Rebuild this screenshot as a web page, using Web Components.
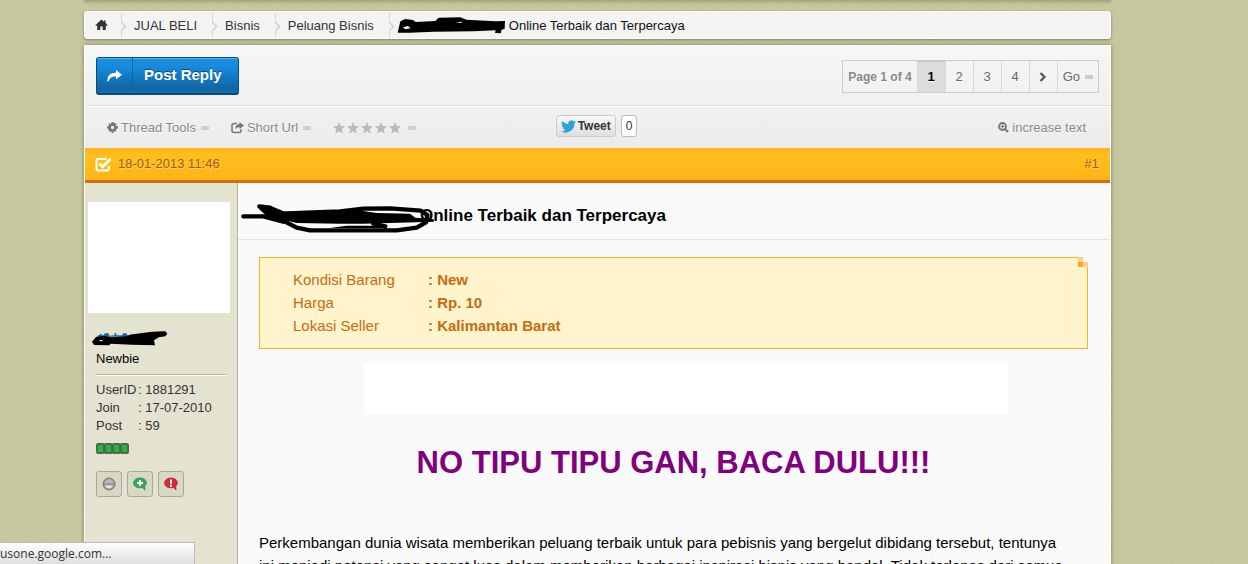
<!DOCTYPE html>
<html lang="id">
<head>
<meta charset="utf-8">
<meta name="viewport" content="width=device-width">
<title>Online Terbaik dan Terpercaya</title>
<style>
html{scrollbar-width:none}
body{margin:0;font:13px/18px "Liberation Sans",Arial,sans-serif;color:#333;
background:repeating-linear-gradient(135deg,#c9c9a1 0 2px,#c6c69d 2px 4px)}
</style>
</head>
<body>
<forum-page>
  <forum-breadcrumb>
    <a href="#">JUAL BELI</a>
    <a href="#">Bisnis</a>
    <a href="#">Peluang Bisnis</a>
    <span slot="current">Online Terbaik dan Terpercaya</span>
  </forum-breadcrumb>
  <forum-panel>
    <reply-bar><page-nav></page-nav></reply-bar>
    <thread-tools></thread-tools>
    <post-header><time slot="date" datetime="2013-01-18T11:46">18-01-2013 11:46</time><a slot="number" href="#1">#1</a></post-header>
    <forum-post>
      <user-card slot="user"><span>Newbie</span></user-card>
      <post-title slot="title">Online Terbaik dan Terpercaya</post-title>
      <listing-info></listing-info>
      <post-body>
        <span slot="heading">NO TIPU TIPU GAN, BACA DULU!!!</span>
        Perkembangan dunia wisata memberikan peluang terbaik untuk para pebisnis yang bergelut dibidang tersebut, tentunya<br>
        ini menjadi potensi yang sangat luas dalam memberikan berbagai inspirasi bisnis yang handal. Tidak terlepas dari semua
      </post-body>
    </forum-post>
  </forum-panel>
</forum-page>
<status-bubble>usone.google.com...</status-bubble>
<script>
function component(name, html) {
  customElements.define(name, class extends HTMLElement {
    constructor() {
      super();
      const template = document.createElement('template');
      template.innerHTML = '<style>:host,*{box-sizing:border-box}a{color:inherit;text-decoration:none}svg{display:block;flex:none}</style>' + html;
      this.attachShadow({ mode: 'open' }).append(template.content.cloneNode(true));
    }
  });
}

component('forum-page', `
<style>
:host{display:block;margin:0 137px 0 84px}
.top{height:1px;background:#a3a37f;box-shadow:0 1px 3px #77775a}
main{display:flex;flex-direction:column;gap:6px;padding-top:10px}
</style>
<div class="top"></div><main><slot></slot></main>`);

/* Rule with a small chevron that precedes each crumb */
component('crumb-rule', `
<style>:host{display:block;flex:none;width:6px;margin-right:-5px}</style>
<svg width="6" height="26" viewBox="0 0 6 26"><path d="M.500 0V10.500M.500 18.500V26" fill="none" stroke="#d8d8d8"/><path d="M.500 10.500L4.500 14.500.500 18.500" fill="none" stroke="#ccc" stroke-width="1.400"/></svg>`);

component('forum-breadcrumb', `
<style>
:host{display:block}
nav{display:flex;height:28px;align-items:stretch;background:#f3f3f3;border:1px solid #fff;border-radius:3px;box-shadow:0 1px 3px #77775a;padding-left:10px;color:#333;line-height:27px}
.home{display:flex;align-items:center;padding-right:13px}
::slotted(a){color:#333;text-decoration:none;padding:0 15px 0 12px}
.current{display:flex;align-items:center;gap:4px;color:#111}
.current svg{margin-left:7px}
</style>
<nav aria-label="Breadcrumb">
<a class="home" href="#" aria-label="Home"><svg width="13" height="12" viewBox="0 0 13 12"><path fill="#333" d="M6.500 0.500 0.300 6.300l.8.8L2.200 6.200V11h3.100V7.500h2.400V11h3.100V6.200l1.100.9.8-.8L10.600 4V1.400H9v1.300z"/></svg></a>
<slot></slot>
<div class="current"><svg width="108" height="18" viewBox="50 50 324 54"><path d="M52 100 60 66 75 59 98 62 106 68 165 65 175 55 240 54 258 61 345 66 374 65 373 88 363 92 362 102 344 101 346 93 280 96 160 97 142 98 88 100z"/><path d="M68 84l15-4 8 7-16 3zM226 69l20-2-4 4z" fill="#f3f3f3"/></svg><slot name="current"></slot></div>
</nav>`);
for (const host of document.querySelectorAll('forum-breadcrumb')) {
  for (const crumb of host.querySelectorAll('a')) crumb.before(document.createElement('crumb-rule'));
  host.shadowRoot.querySelector('.current').before(document.createElement('crumb-rule'));
}

component('forum-panel', `
<style>:host{display:block;border:1px solid #fff;border-bottom:0;background:#f0f0f0;box-shadow:0 0 4px #77775a}</style><slot></slot>`);

component('reply-bar', `
<style>
:host{display:flex;justify-content:space-between;align-items:flex-start;height:60px;padding:11px 11px 0;background:linear-gradient(#f6f6f6,#f0f0f0);border-bottom:1px solid #ddd}
button{display:flex;align-items:stretch;height:38px;padding:0;border:1px solid #0b4a78;border-bottom-width:2px;border-radius:3px;background:linear-gradient(#178de0 20%,#0f65a4 88%,#1371b3);box-shadow:inset 0 1px #5eb1e8;color:#fff;font:bold 15px/34px "Liberation Sans",Arial,sans-serif;text-shadow:0 -1px #0b4a78}
.icon{display:flex;align-items:center;width:36px;padding-left:10px;border-right:1px solid #0f67a8}
.label{padding:0 16px 0 11px}
</style>
<button type="button"><span class="icon"><svg width="15" height="12" viewBox="0 0 15 12"><path fill="#fff" d="M9 0l6 4.800L9 9.200V6.500C5 6 2.800 7.500 1.800 11L.6 11.800C-.2 6 3 2.600 9 2.700z"/></svg></span><span class="label">Post Reply</span></button>
<slot></slot>`);

component('page-nav', `
<style>
:host{display:block;margin-top:3px}
nav{display:flex;height:33px;border:1px solid #ccc;line-height:30px;color:#666;text-shadow:0 1px #fff}
nav>*{display:flex;align-items:center;justify-content:center;width:28px;border-right:1px solid #d8d8d8}
.count{width:auto;padding:0 5px;font-weight:bold;color:#888;font-size:12px}
.on{background:#dcdcdc;color:#000;font-weight:bold;box-shadow:inset 0 1px #c4c4c4}
.go{width:auto;gap:5px;padding:0 5px;border:0}
i{width:8px;height:4px;background:#ccc}
</style>
<nav aria-label="Pages"><span class="count">Page 1 of 4</span><a class="on" href="#">1</a><a href="#">2</a><a href="#">3</a><a href="#">4</a><a href="#" aria-label="Next"><svg width="8" height="10" viewBox="0 0 8 10"><path d="M1.500 1l4 4-4 4" fill="none" stroke="#555" stroke-width="2.200"/></svg></a><a class="go" href="#">Go<i></i></a></nav>`);

const star = '<svg width="12" height="12" viewBox="0 0 12 12"><path fill="#bbb" d="M6 0l1.700 3.900 4.300.4-3.200 2.900.9 4.400L6 9.300l-3.700 2.300.9-4.400L0 4.300l4.300-.4z"/></svg>';
component('thread-tools', `
<style>
:host{display:grid;grid-template-columns:1fr auto 1fr;align-items:center;height:42px;padding:0 24px 0 22px;background:linear-gradient(#f1f1f1,#ebebeb);border-top:1px solid #fff;color:#888;text-shadow:0 1px #fff}
.left,.left a,.stars,.zoom,.tweet{display:flex;align-items:center}
.left{gap:22px}
.left a{gap:3px}
.stars{gap:2px}
i{width:8px;height:4px;margin-left:2px;background:#d0d0d0}
.stars i{margin-left:5px}
.zoom{justify-self:end;gap:3px}
.tweet{gap:5px;margin-bottom:3px}
button{display:flex;align-items:center;gap:2px;width:60px;height:22px;padding:0 4px;border:1px solid #ccc;border-radius:3px;background:linear-gradient(#f8f8f8,#dedede);color:#333;font:bold 12px/20px "Liberation Sans",Arial,sans-serif}
.num{height:22px;padding:0 4px;border:1px solid #bbb;border-radius:3px;background:#fff;color:#333;line-height:20px;font-size:12px}
</style>
<div class="left">
<a href="#"><svg width="11" height="11" viewBox="0 0 12 12"><path fill="#777" fill-rule="evenodd" d="M5 0h2l.4 1.700 1.200-.9 1.700 1.500-.8 1.400L12 5v2l-2.300.6.8 1.400-1.500 1.600-1.600-.9L7 12H5l-.5-2.300-1.500.9L1.400 9l.9-1.400L0 7V5l2.200-.7-.8-1.400L3 1.300l1.500.9zM6 4.200a1.800 1.800 0 100 3.600 1.800 1.800 0 000-3.600z"/></svg>Thread Tools<i></i></a>
<a href="#"><svg width="13" height="12" viewBox="0 0 13 12"><path d="M6 1.500H3Q1 1.500 1 3.500v5q0 2 2 2h5q2 0 2-2V7" fill="none" stroke="#777" stroke-width="1.500"/><path fill="#777" d="M8.500 0L13 3.600 8.500 7V5Q5.500 5 4.500 7.500 4 2.200 8.500 2z"/></svg>Short Url<i></i></a>
<div class="stars" role="img" aria-label="Rating">${star.repeat(5)}<i></i></div>
</div>
<div class="tweet"><button type="button"><svg width="15" height="13" viewBox="0 0 24 20"><path fill="#2aa3dc" d="M24 2.400a10 10 0 01-2.800.8A5 5 0 0023.300.500a10 10 0 01-3.100 1.200A4.900 4.900 0 0011.800 6.200 14 14 0 011.700 1a4.900 4.900 0 001.500 6.600A5 5 0 011 7a4.900 4.900 0 004 4.900 5 5 0 01-2.300.1 4.900 4.900 0 004.600 3.400A9.900 9.900 0 010 17.500 14 14 0 0021.500 5z"/></svg>Tweet</button><a class="num" href="#">0</a></div>
<a class="zoom" href="#"><svg width="11" height="11" viewBox="0 0 11 11"><circle cx="4.500" cy="4.500" r="3.500" fill="none" stroke="#777" stroke-width="1.800"/><path d="M7 7l3 3" stroke="#777" stroke-width="2.200"/><path d="M2.500 4.500h4M4.500 2.500v4" stroke="#777"/></svg>increase text</a>`);

component('post-header', `
<style>
:host{display:flex;align-items:center;gap:6px;height:35px;padding:0 11px 0 10px;background:linear-gradient(#ffb41c,#ffc01c 25%,#ffb419);border-bottom:3px solid #cd7114;color:#9c5b10;text-shadow:1px 1px #ffd268}
::slotted(a){margin-left:auto;color:inherit;text-decoration:none}
</style>
<svg width="17" height="15" viewBox="0 0 17 15"><path d="M11.500 2H3.500Q1.500 2 1.500 4v7.500q0 2 2 2H12q2 0 2-2V9" fill="none" stroke="#fff" stroke-width="2"/><path d="M4.500 6.500l3.200 3.200L15.500 2" fill="none" stroke="#fff" stroke-width="2.800"/></svg>
<slot name="date"></slot><slot name="number"></slot>`);

component('forum-post', `
<style>
:host{display:grid;grid-template-columns:153px 1fr;background:#fafafa;color:#000}
aside{background:#e3e3cf;border-right:1px solid #b4b4a2}
.content{display:flex;flex-direction:column;gap:14px;padding:17px 22px 0 21px}
</style>
<aside><slot name="user"></slot></aside>
<article><slot name="title"></slot><div class="content"><slot></slot></div></article>`);

component('user-card', `
<style>
:host{display:block;padding:19px 0 0 3px;color:#333}
.avatar{width:142px;height:111px;background:#fff}
.info{margin:18px 11px 0 8px}
.name{display:block;margin-left:-4px}
.rank{margin-top:4px;padding-bottom:6px;border-bottom:1px solid #b2b2a0;box-shadow:0 1px #fff;color:#000}
table{margin-top:6px;border-spacing:0}
th,td{padding:0;text-align:left;font-weight:normal}
th{width:42px}
.bars{display:flex;margin-top:8px}
.bars b{width:9px;height:11px;margin-right:-1px;border:2px solid #55645a;border-radius:2px;background:#25bb2d}
.actions{display:flex;gap:5px;margin-top:17px}
button{display:grid;place-items:center;width:26px;height:26px;padding:0;border:1px solid #aaa998;border-radius:3px;background:#d8d8c4}
</style>
<div class="avatar"></div>
<div class="info">
<a class="name" href="#" aria-label="Profile"><svg width="76" height="15" viewBox="36 452 228 45"><path fill="#0a6cb5" d="M51 468l12-8 6 6 6-7 10-1 3 8 16-1V458h5v7h18l2-6h10l4 7 10-4 12-1v8H51z"/><path d="M36 484 48 470 70 466 95 471 135 468 160 462 215 454 256 453 262 460 256 468 236 471 222 480 225 495 155 493 92 490 88 495 42 494z"/><path d="M58 481h10" stroke="#fff" stroke-width="3"/></svg></a>
<div class="rank"><slot></slot></div>
<table><tr><th>UserID</th><td>: 1881291</td></tr><tr><th>Join</th><td>: 17-07-2010</td></tr><tr><th>Post</th><td>: 59</td></tr></table>
<div class="bars" role="img" aria-label="Reputation"><b></b><b></b><b></b><b></b></div>
<div class="actions">
<button type="button" aria-label="Status"><svg width="14" height="14" viewBox="0 0 14 14"><circle cx="7" cy="7" r="6" fill="#999" stroke="#77777c"/><path d="M3 6a4 3.500 0 018 0z" fill="#bbb"/><path d="M3 8.500h8Q10 11.500 7 11.500T3 8.500z" fill="#e5e5e5"/></svg></button>
<button type="button" aria-label="Give reputation"><svg width="14" height="14" viewBox="0 0 14 14"><path fill="#35a853" stroke="#22813b" stroke-width=".6" d="M7 1C3 1 .600 3.200.600 6S3 10.800 7 10.800c1 0 1.800 0 2.400-.3L12 13l-.3-4C13 8 13.400 7 13.400 6 13.400 3.200 11 1 7 1z"/><path d="M7 3v6M4 6h6" stroke="#fff" stroke-width="2"/></svg></button>
<button type="button" aria-label="Report"><svg width="14" height="14" viewBox="0 0 14 14"><path fill="#d92635" stroke="#a81724" stroke-width=".6" d="M7 1C3 1 .600 3.200.600 6S3 10.800 7 10.800c1 0 1.800 0 2.400-.3L12 13l-.3-4C13 8 13.400 7 13.400 6 13.400 3.200 11 1 7 1z"/><path d="M7 2.500v4.300M7 7.800v2" stroke="#fff" stroke-width="2"/></svg></button>
</div>
</div>`);

component('post-title', `
<style>
:host{display:block;position:relative;padding:23px 22px 13px 182px;border-bottom:1px solid #e4e4e4}
h1{margin:0;font:bold 17px/20px "Liberation Sans",Arial,sans-serif;color:#000}
svg{position:absolute;left:3px;top:20px}
</style>
<h1><slot></slot></h1>
<svg width="194" height="31" viewBox="33 36 582 93" fill="none" stroke="#000" stroke-width="13" stroke-linecap="round" stroke-linejoin="round"><path d="M40 76H100L160 92 M88 46 120 50 152 68 130 84 92 50 M120 66 165 92 200 110 240 118 500 118 560 110 588 94 592 72 572 59 480 52 400 53 330 61 210 66 160 68 M430 98 466 106"/><path stroke="none" fill="#000" d="M88 44 130 48 165 62 330 58 400 60 440 66 540 68 556 80 610 84 612 92 400 98 330 98 200 96 150 84 100 66zM350 104h120v7H300z"/></svg>`);

component('listing-info', `
<style>
:host{display:block;position:relative;border:1px solid #ffb31a;background:#fff4cc;padding:10px 33px 11px;color:#c96a10;font-size:15px;line-height:23px}
table{border-spacing:0}
th,td{padding:0;text-align:left}
th{width:135px;font-weight:normal}
td{font-weight:bold}
svg{position:absolute;right:-1px;top:-1px}
</style>
<table><tr><th>Kondisi Barang</th><td>: New</td></tr><tr><th>Harga</th><td>: Rp. 10</td></tr><tr><th>Lokasi Seller</th><td>: Kalimantan Barat</td></tr></table>
<svg width="10" height="10" viewBox="0 0 10 10"><path fill="#fafafa" d="M0 0h10v10H0z"/><path fill="#fbd08a" d="M0 0h5v5H0zM5 5h5v5H5z"/><path fill="#ffab0e" d="M0 5h5v5H0z"/></svg>`);

component('post-body', `
<style>
:host{display:block;font-size:15px;line-height:23px}
.banner{height:51px;margin:0 80px 0 105px;background:#fff}
h2{margin:31px 0 50px;font-size:31px;line-height:36px;text-align:center;color:purple}
p{margin:0}
</style>
<div class="banner"></div>
<h2><slot name="heading"></slot></h2>
<p><slot></slot></p>`);

component('status-bubble', `
<style>
:host{display:block;position:fixed;left:0;bottom:0;width:195px;height:22px;border:1px solid #bbb;border-width:1px 1px 0 0;background:linear-gradient(#fff,#dedede);color:#333;font:12px/22px "Open Sans",sans-serif}
</style><slot></slot>`);
</script>
</body>
</html>
